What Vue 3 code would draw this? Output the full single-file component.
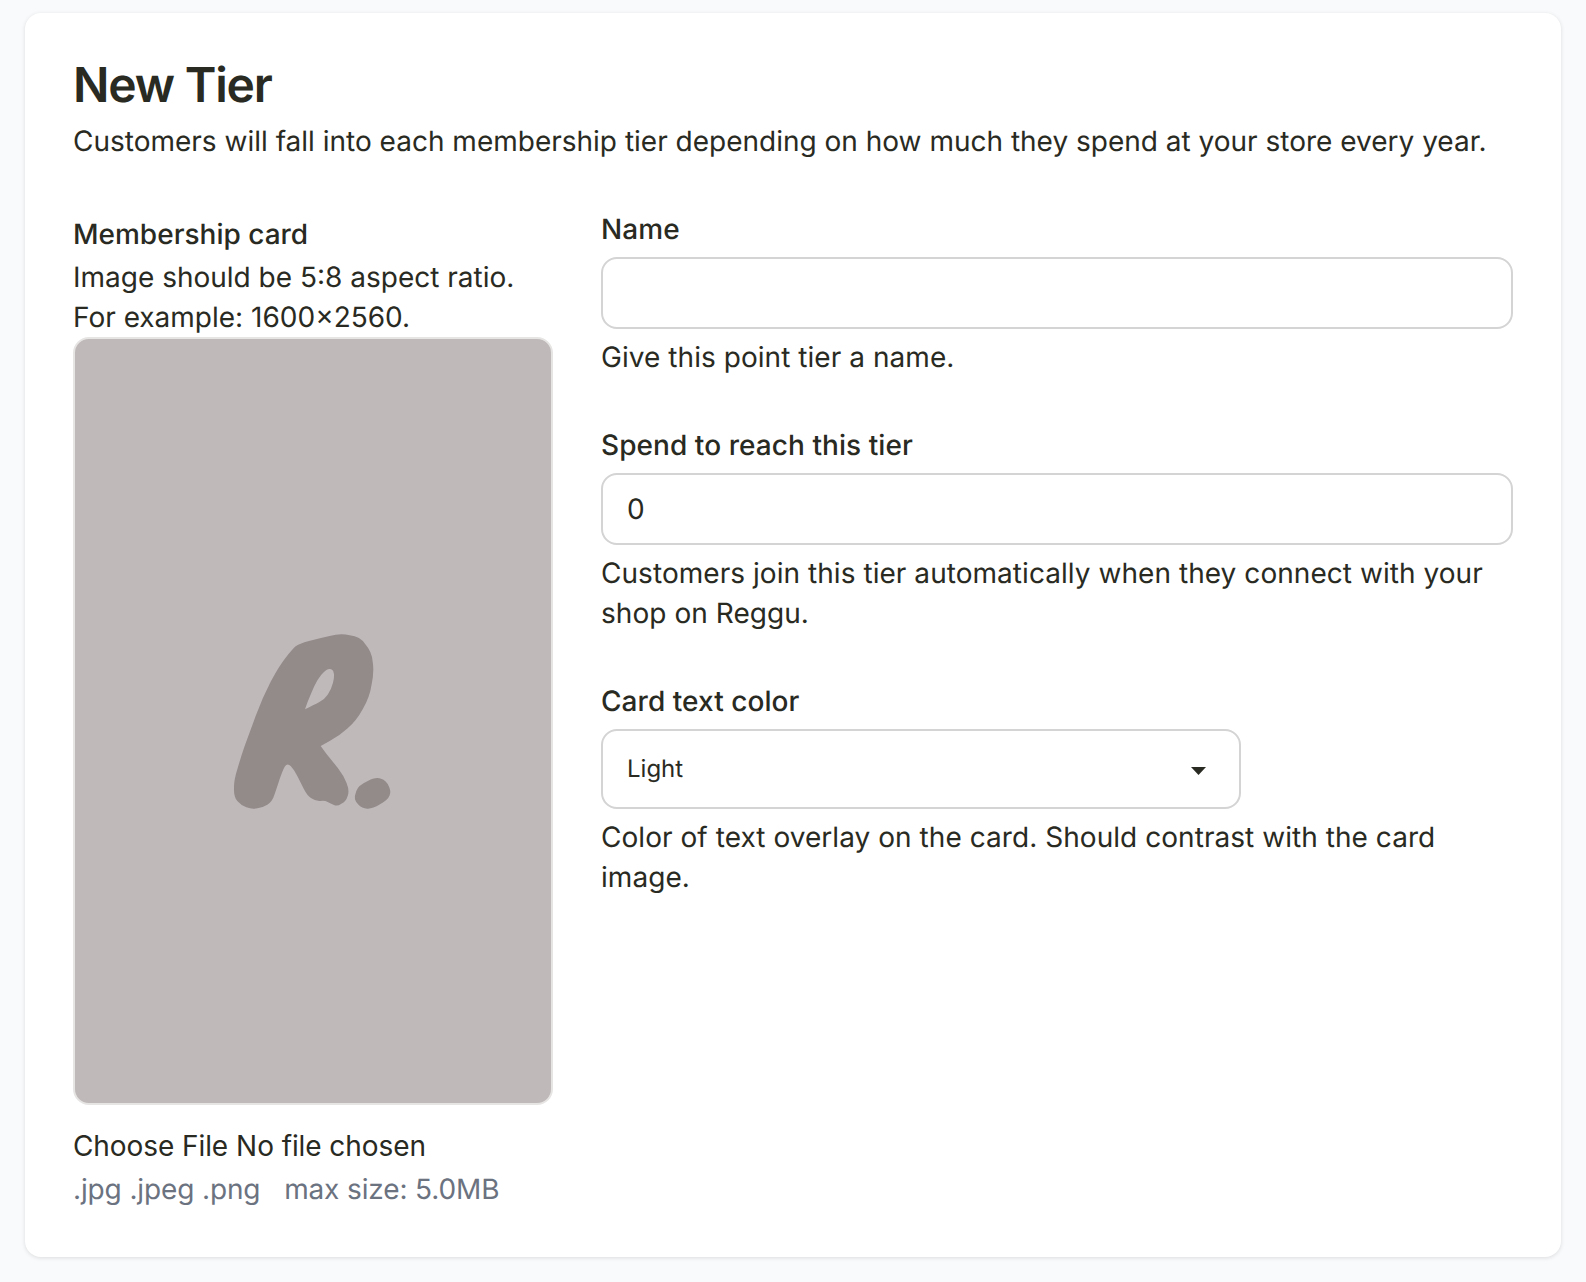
<template>
  <div class="page">
    <form class="card" @submit.prevent>
      <h1 class="title">New Tier</h1>
      <p class="subtitle">Customers will fall into each membership tier depending on how much they spend at your store every year.</p>

      <div class="columns">
        <div class="card-col">
          <div class="label">Membership card</div>
          <p class="image-hint">Image should be 5:8 aspect ratio.<br>For example: 1600×2560.</p>
          <div class="preview">
            <svg class="logo" viewBox="12 0 660 720" width="220" height="240" aria-hidden="true">
              <path fill-rule="evenodd" d="M105 562Q104 540 115 505Q125 470 137 435Q150 400 170 345Q190 290 215 242Q240 195 260 170Q280 145 290 136Q300 128 330 120Q360 112 392 105Q425 96 452 103Q484 106 499 130Q519 153 521 182Q526 210 518 250Q512 290 491 325Q472 360 446 382Q421 405 392 420L365 435L382 458Q400 480 417 502Q435 525 443 547Q452 570 446 585Q441 602 427 608Q415 617 405 612Q395 608 386 603Q378 598 364 600Q350 601 337 592Q325 585 315 565Q305 545 295 525Q285 505 275 495Q265 485 257 497Q250 510 241 537Q232 565 226 582Q220 602 205 611Q190 620 175 622Q160 626 142 619Q125 612 115 600Q104 588 105 562ZM318 325L326 302Q335 280 345 257Q355 235 367 221Q380 206 390 204Q402 203 404 215Q407 225 402 245Q397 265 386 281Q376 296 360 304Q345 312 318 325Z"/>
              <path d="M472 570Q478 553 505 541Q530 527 546 533Q562 538 569 555Q577 570 572 583Q567 597 543 610Q520 624 505 623Q488 622 480 613Q470 605 468 595Q466 585 472 570Z"/>
            </svg>
          </div>
          <input class="file" type="file" accept=".jpg,.jpeg,.png">
          <div class="file-hint">.jpg .jpeg .png <span class="max-size">max size: 5.0MB</span></div>
        </div>

        <div class="fields">
          <div class="field">
            <label class="label" for="name">Name</label>
            <input id="name" v-model="name" class="input" type="text">
            <p class="help">Give this point tier a name.</p>
          </div>
          <div class="field">
            <label class="label" for="spend">Spend to reach this tier</label>
            <input id="spend" v-model="spend" class="input" type="text">
            <p class="help">Customers join this tier automatically when they connect with your shop on Reggu.</p>
          </div>
          <div class="field">
            <label class="label" for="color">Card text color</label>
            <div class="select-wrap">
              <select id="color" v-model="textColor" class="select">
                <option>Light</option>
                <option>Dark</option>
              </select>
              <svg class="caret" viewBox="0 0 15 8" width="15" height="8" aria-hidden="true">
                <path d="M0 0H15L7.5 8Z"/>
              </svg>
            </div>
            <p class="help">Color of text overlay on the card. Should contrast with the card image.</p>
          </div>
        </div>
      </div>
    </form>
  </div>
</template>

<script setup>
import { ref } from 'vue';

const name = ref('');
const spend = ref('0');
const textColor = ref('Light');
</script>

<style>
html, body {
  background: #f9fafb;
}
</style>

<style scoped>
.page {
  padding: 13px 25px 25px;
  font-family: Inter, "Liberation Sans", sans-serif;
  font-size: 28px;
  line-height: 40px;
  color: #292a22;
  text-rendering: geometricPrecision;
}
.card {
  background: #fff;
  border-radius: 16px;
  padding: 48px;
  box-shadow: 0 1px 4px rgba(0, 0, 0, 0.12);
}
.title {
  margin: 0;
  font-size: 48px;
  line-height: 48px;
  font-weight: 600;
  letter-spacing: -1.2px;
}
.subtitle {
  margin: 12px 0 0;
}
.columns {
  display: grid;
  grid-template-columns: 480px 1fr;
  gap: 48px;
  margin-top: 48px;
}
.card-col {
  padding-top: 5px;
}
.label {
  display: block;
  font-weight: 500;
}
.image-hint {
  margin: 3px 0 0;
}
.preview {
  box-sizing: border-box;
  height: 768px;
  display: flex;
  align-items: center;
  justify-content: center;
  background: #bfb9b9;
  border: 2px solid #e7e5e4;
  border-radius: 16px;
  fill: #938a8a;
}
.file {
  display: block;
  width: 100%;
  margin-top: 21px;
  padding: 0;
  font: inherit;
  color: inherit;
  letter-spacing: -0.08px;
}
.file::file-selector-button {
  margin: 0 8px 0 0;
  padding: 0;
  border: 0;
  background: none;
  font: inherit;
  color: inherit;
  letter-spacing: inherit;
}
.file-hint {
  margin-top: 3px;
  color: #6b7280;
  letter-spacing: -0.13px;
}
.max-size {
  margin-left: 16px;
}
.fields {
  display: flex;
  flex-direction: column;
  gap: 48px;
}
.input,
.select {
  display: block;
  box-sizing: border-box;
  margin-top: 8px;
  background: #fff;
  border: 2px solid #d4d4d4;
  border-radius: 16px;
  color: inherit;
  font-family: inherit;
  text-rendering: inherit;
  outline: none;
}
.input {
  width: 100%;
  height: 72px;
  padding: 0 24px;
  font-size: 28px;
}
.select-wrap {
  position: relative;
  width: 640px;
}
.select {
  width: 100%;
  height: 80px;
  padding: 0 24px 2px;
  font-size: 24px;
  appearance: none;
}
.caret {
  position: absolute;
  top: 38px;
  right: 35px;
  fill: #292a22;
  pointer-events: none;
}
.help {
  margin: 8px 0 0;
  letter-spacing: 0.05px;
}
.fields .label {
  letter-spacing: 0.06px;
}
</style>
